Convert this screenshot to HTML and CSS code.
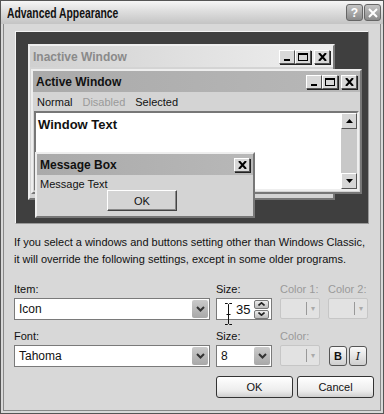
FILE: index.html
```html
<!DOCTYPE html>
<html lang="en">
<head>
<meta charset="UTF-8">
<title>Advanced Appearance</title>
<link rel="stylesheet" href="styles.css">
</head>
<body>
<div class="dialog">
    <div class="titlebar">
        <span class="title">Advanced Appearance</span>
        <div class="title-buttons">
            <span class="tbtn">?</span>
            <span class="tbtn">
                <svg width="10" height="10" viewBox="0 0 10 10"><path d="M1 1L9 9M9 1L1 9" stroke="#fff" stroke-width="2"/></svg>
            </span>
        </div>
    </div>
    <div class="content">
        <div class="preview">
            <div class="win inactive">
                <div class="cap">
                    <span>Inactive Window</span>
                    <div class="caps">
                        <span class="cbtn"><i class="min"></i></span><span class="cbtn"><i class="max"></i></span><span class="cbtn gap"><svg width="9" height="8" viewBox="0 0 9 8"><path d="M1 0L8 8M8 0L1 8" stroke="#000" stroke-width="2"/></svg></span>
                    </div>
                </div>
            </div>
            <div class="win active">
                <div class="cap">
                    <span>Active Window</span>
                    <div class="caps">
                        <span class="cbtn"><i class="min"></i></span><span class="cbtn"><i class="max"></i></span><span class="cbtn gap"><svg width="9" height="8" viewBox="0 0 9 8"><path d="M1 0L8 8M8 0L1 8" stroke="#000" stroke-width="2"/></svg></span>
                    </div>
                </div>
                <div class="menu">
                    <span>Normal</span><span class="dis">Disabled</span><span>Selected</span>
                </div>
                <div class="textarea">
                    <div class="wtext">Window Text</div>
                    <div class="vscroll">
                        <span class="sbtn"><svg width="7" height="4" viewBox="0 0 7 4"><path d="M3.5 0L7 4H0z"/></svg></span>
                        <span class="strack"></span>
                        <span class="sbtn"><svg width="7" height="4" viewBox="0 0 7 4"><path d="M0 0H7L3.5 4z"/></svg></span>
                    </div>
                </div>
            </div>
            <div class="win msgbox">
                <div class="cap">
                    <span>Message Box</span>
                    <div class="caps">
                        <span class="cbtn"><svg width="9" height="8" viewBox="0 0 9 8"><path d="M1 0L8 8M8 0L1 8" stroke="#000" stroke-width="2"/></svg></span>
                    </div>
                </div>
                <div class="msgtext">Message Text</div>
                <div class="msgok"><span class="okbtn">OK</span></div>
            </div>
        </div>

        <p class="note">If you select a windows and buttons setting other than Windows Classic,<br>it will override the following settings, except in some older programs.</p>

        <div class="row">
            <div class="field f-item">
                <label>Item:</label>
                <div class="combo">
                    <span class="val">Icon</span>
                    <span class="drop"><svg width="9" height="6" viewBox="0 0 9 6"><path d="M1 1L4.5 4.5L8 1" stroke="#333" stroke-width="2" fill="none"/></svg></span>
                </div>
            </div>
            <div class="field f-size">
                <label>Size:</label>
                <div class="spin">
                    <span class="val">35</span>
                    <span class="spinbtns">
                        <span class="sp"><svg width="7" height="4" viewBox="0 0 7 4"><path d="M0.5 3.5L3.5 0.8L6.5 3.5" stroke="#222" stroke-width="1.6" fill="none"/></svg></span>
                        <span class="sp"><svg width="7" height="4" viewBox="0 0 7 4"><path d="M0.5 0.5L3.5 3.2L6.5 0.5" stroke="#222" stroke-width="1.6" fill="none"/></svg></span>
                    </span>
                    <svg class="ibeam" width="9" height="22" viewBox="0 0 9 22"><path d="M1 0.5H3.5L4.5 1.5L5.5 0.5H8M4.5 1.5V20.5M1 21.5H3.5L4.5 20.5L5.5 21.5H8M2.5 11.5H6.5" stroke="#111" stroke-width="1" fill="none"/></svg>
                </div>
            </div>
            <div class="field f-color">
                <label class="dis">Color 1:</label>
                <div class="colorbtn"><span class="swatch"></span><span class="arr">&#9662;</span></div>
            </div>
            <div class="field f-color">
                <label class="dis">Color 2:</label>
                <div class="colorbtn"><span class="swatch"></span><span class="arr">&#9662;</span></div>
            </div>
        </div>

        <div class="row">
            <div class="field f-item">
                <label>Font:</label>
                <div class="combo">
                    <span class="val">Tahoma</span>
                    <span class="drop"><svg width="9" height="6" viewBox="0 0 9 6"><path d="M1 1L4.5 4.5L8 1" stroke="#333" stroke-width="2" fill="none"/></svg></span>
                </div>
            </div>
            <div class="field f-size">
                <label>Size:</label>
                <div class="combo">
                    <span class="val">8</span>
                    <span class="drop"><svg width="9" height="6" viewBox="0 0 9 6"><path d="M1 1L4.5 4.5L8 1" stroke="#333" stroke-width="2" fill="none"/></svg></span>
                </div>
            </div>
            <div class="field f-color">
                <label class="dis">Color:</label>
                <div class="colorbtn"><span class="swatch"></span><span class="arr">&#9662;</span></div>
            </div>
            <div class="field f-style">
                <span class="stylebtn bold">B</span>
                <span class="stylebtn ital">I</span>
            </div>
        </div>

        <div class="buttons">
            <span class="btn">OK</span>
            <span class="btn">Cancel</span>
        </div>
    </div>
</div>
</body>
</html>
```

FILE: styles.css
```css
body {
    margin: 0;
    background-color: #fff;
    font-family: "Liberation Sans", Arial, sans-serif;
    font-size: 11px;
    color: #111;
}
.dialog {
    width: 382px;
    height: 412px;
    border: 1px solid #555;
    background-color: #d8d8d8;
    display: flex;
    flex-direction: column;
    overflow: hidden;
}
.titlebar {
    flex-shrink: 0;
    height: 23px;
    display: flex;
    align-items: center;
    justify-content: space-between;
    padding: 0 2px 0 6px;
    background: linear-gradient(#f6f6f6, #e0e0e0 40%, #c4c4c4);
}
.title {
    display: inline-block;
    font-weight: bold;
    font-size: 14px;
    color: #111;
    transform: scaleX(0.74);
    transform-origin: left center;
}
.title-buttons {
    display: flex;
    gap: 1px;
}
.tbtn {
    width: 15px;
    height: 15px;
    border: 1px solid #666;
    border-radius: 3px;
    background: linear-gradient(#c4c4c4, #8a8a8a);
    color: #fff;
    font-weight: bold;
    font-size: 12px;
    display: flex;
    align-items: center;
    justify-content: center;
}
.content {
    flex: 1;
    border: 1px solid #888;
    border-top: none;
    margin: 0 2px 2px;
    padding: 7px 0 0 10px;
}
.preview {
    position: relative;
    width: 352px;
    height: 191px;
    margin-left: 1px;
    background-color: #3f3f3f;
    border: 1px solid #f4f4f4;
    border-right-color: #999;
    border-bottom-color: #999;
}
.win {
    position: absolute;
    background-color: #d4d4d4;
    border: 2px solid #eee;
    border-right-color: #777;
    border-bottom-color: #777;
    display: flex;
    flex-direction: column;
}
.cap {
    height: 21px;
    display: flex;
    align-items: center;
    justify-content: space-between;
    padding: 0 3px 0 3px;
    font-weight: bold;
    font-size: 12px;
}
.caps {
    display: flex;
}
.cbtn {
    width: 14px;
    height: 12px;
    background-color: #d8d8d8;
    border: 1px solid #fff;
    border-right-color: #555;
    border-bottom-color: #555;
    box-shadow: 1px 1px 0 #222;
    display: flex;
    align-items: center;
    justify-content: center;
}
.cbtn.gap {
    margin-left: 3px;
}
.min {
    width: 6px;
    height: 2px;
    background-color: #000;
    margin-top: 6px;
}
.max {
    width: 8px;
    height: 5px;
    border: 1px solid #000;
    border-top-width: 2px;
}
.inactive {
    left: 12px;
    top: 12px;
    width: 303px;
    height: 152px;
}
.inactive .cap {
    background: linear-gradient(90deg, #d0d0d0, #efefef);
    color: #8a8a8a;
}
.active {
    left: 15px;
    top: 37px;
    width: 327px;
    height: 121px;
}
.active .cap,
.msgbox .cap {
    background: linear-gradient(90deg, #aaaaaa, #b8b8b8);
    color: #111;
}
.menu {
    height: 19px;
    display: flex;
    align-items: center;
    gap: 10px;
    padding-left: 4px;
}
.dis {
    color: #9a9a9a;
}
.textarea {
    flex: 1;
    margin: 0 1px 1px 1px;
    background-color: #fff;
    border: 2px solid #777;
    border-right-color: #eee;
    border-bottom-color: #eee;
    display: flex;
}
.wtext {
    flex: 1;
    font-weight: bold;
    font-size: 13px;
    padding: 4px 0 0 2px;
}
.vscroll {
    width: 16px;
    display: flex;
    flex-direction: column;
    background-color: #c8c8c8;
}
.sbtn {
    height: 14px;
    background-color: #d6d6d6;
    border: 1px solid #fff;
    border-right-color: #555;
    border-bottom-color: #555;
    display: flex;
    align-items: center;
    justify-content: center;
}
.strack {
    flex: 1;
}
.msgbox {
    left: 19px;
    top: 120px;
    width: 216px;
    height: 62px;
}
.msgtext {
    padding: 3px 0 0 3px;
}
.msgok {
    display: flex;
    padding-left: 70px;
}
.okbtn {
    width: 68px;
    height: 19px;
    border: 1px solid #fff;
    border-right-color: #444;
    border-bottom-color: #444;
    box-shadow: inset -1px -1px 0 #888;
    display: flex;
    align-items: center;
    justify-content: center;
}
.note {
    margin: 10px 0 0 0;
    line-height: 17px;
    white-space: nowrap;
}
.row {
    display: flex;
    margin-top: 15px;
}
.row + .row {
    margin-top: 10px;
}
.field label {
    display: block;
    height: 13px;
    line-height: 13px;
    margin-bottom: 2px;
    white-space: nowrap;
}
.f-item {
    width: 196px;
    margin-right: 6px;
}
.f-size {
    width: 56px;
    margin-right: 8px;
}
.f-color {
    width: 40px;
    margin-right: 8px;
}
.combo, .spin {
    height: 20px;
    border: 1px solid #7a7a7a;
    background-color: #fff;
    display: flex;
    align-items: center;
}
.combo .val {
    flex: 1;
    padding-left: 4px;
    font-size: 12px;
}
.drop {
    width: 16px;
    height: 18px;
    margin-right: 1px;
    border-radius: 2px;
    background: linear-gradient(#cacaca, #a8a8a8);
    display: flex;
    align-items: center;
    justify-content: center;
}
.spin {
    position: relative;
}
.spin .val {
    flex: 1;
    padding-left: 19px;
    font-size: 13px;
}
.ibeam {
    position: absolute;
    left: 7px;
    top: 4px;
}
.spinbtns {
    display: flex;
    flex-direction: column;
    gap: 1px;
    margin-right: 2px;
}
.sp {
    width: 13px;
    height: 7px;
    border: 1px solid #777;
    border-radius: 2px;
    background: linear-gradient(#eee, #bbb);
    display: flex;
    align-items: center;
    justify-content: center;
}
.colorbtn {
    height: 19px;
    margin-top: 1px;
    border: 1px solid #c6c6c6;
    border-radius: 2px;
    background-color: #e2e2e2;
    display: flex;
    align-items: center;
}
.swatch {
    flex: 1;
    height: 13px;
    margin-left: 3px;
    border-right: 1px solid #999;
}
.arr {
    width: 12px;
    color: #aaa;
    font-size: 8px;
    text-align: center;
}
.f-style {
    display: flex;
    gap: 2px;
    align-items: flex-end;
    padding-bottom: 1px;
    margin-left: 1px;
}
.stylebtn {
    width: 16px;
    height: 18px;
    border: 1px solid #555;
    border-radius: 3px;
    background: linear-gradient(#fafafa, #cfcfcf);
    display: flex;
    align-items: center;
    justify-content: center;
    font-weight: bold;
    font-size: 11px;
}
.ital {
    font-family: "DejaVu Serif", serif;
    font-style: italic;
    font-weight: normal;
}
.buttons {
    display: flex;
    gap: 4px;
    padding-left: 202px;
    margin-top: 9px;
}
.btn {
    width: 75px;
    height: 20px;
    border: 1px solid #333;
    border-radius: 3px;
    background: linear-gradient(#fff, #ececec 70%, #cfcfcf);
    display: flex;
    align-items: center;
    justify-content: center;
}
```
